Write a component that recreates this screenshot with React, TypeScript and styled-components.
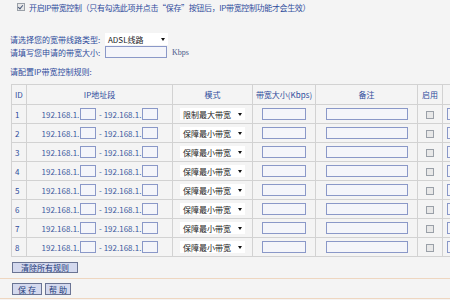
import React from 'react';
import styled, { createGlobalStyle } from 'styled-components';

const GlobalStyle = createGlobalStyle`
  html, body {
    margin: 0;
    padding: 0;
    background: #f4f4f4;
    overflow: hidden;
  }
  body {
    font-family: "Noto Sans CJK SC", "Noto Sans", sans-serif;
    font-size: 8px;
    color: #2f4c9c;
  }
`;

const Page = styled.div`
  width: 520px;
  display: flex;
  flex-direction: column;
`;

const EnableRow = styled.label`
  display: flex;
  align-items: center;
  gap: 4px;
  height: 12px;
  margin: 1px 0 0 17px;
  letter-spacing: -0.35px;
`;

const Check = styled.span<{ checked?: boolean }>`
  display: inline-block;
  box-sizing: border-box;
  width: 8px;
  height: 8px;
  border: 1px solid #9aa0a8;
  background: #e8e8e8;
  position: relative;
  vertical-align: middle;
  &::after {
    content: '';
    display: ${p => (p.checked ? 'block' : 'none')};
    position: absolute;
    left: 1px;
    top: 0;
    width: 2px;
    height: 4px;
    border: solid #4a5a7a;
    border-width: 0 1px 1px 0;
    transform: rotate(40deg);
  }
`;

const FormBlock = styled.div`
  display: flex;
  flex-direction: column;
  gap: 1px;
  margin: 20px 0 0 10px;
`;

const FormRow = styled.div`
  display: flex;
  align-items: center;
  height: 12px;
`;

const FormLabel = styled.span`
  width: 95px;
`;

const FakeSelect = styled.div<{ w: number }>`
  box-sizing: border-box;
  width: ${p => p.w}px;
  height: 12px;
  background: #fff;
  display: flex;
  align-items: center;
  justify-content: space-between;
  padding: 0 3px;
  color: #222;
  font-size: 8px;
  &::after {
    content: '';
    border-left: 2.5px solid transparent;
    border-right: 2.5px solid transparent;
    border-top: 3px solid #111;
  }
`;

const TextBox = styled.span<{ w: number }>`
  display: inline-block;
  box-sizing: border-box;
  width: ${p => p.w}px;
  height: 12px;
  border: 1px solid #8a98c8;
  background: #f4f5fa;
  vertical-align: middle;
`;

const Unit = styled.span`
  margin-left: 5px;
  font-family: "Liberation Serif", serif;
  font-size: 8px;
  color: #4a5a8a;
`;

const Caption = styled.div`
  margin: 9px 0 0 10px;
  height: 10px;
  line-height: 10px;
`;

const Table = styled.table`
  margin: 7px 0 0 11px;
  border-collapse: collapse;
  table-layout: fixed;
  width: 520px;
  td, th {
    border: 1px solid #d2d2d2;
    padding: 0;
    font-weight: normal;
    white-space: nowrap;
    overflow: hidden;
  }
`;

const Head = styled.tr`
  height: 20px;
  th { text-align: center; }
  th:first-child { text-align: left; padding-left: 3px; }
`;

const Row = styled.tr`
  height: 19px;
  td { text-align: center; }
  td:first-child { text-align: left; padding-left: 3px; }
`;

const IpText = styled.span`
  color: #3d5aa0;
  margin: 0 1px;
  vertical-align: middle;
`;

const ModeCell = styled.td`
  && { text-align: left; padding-left: 7px; }
`;

const ExtraCell = styled.td`
  && { text-align: left; padding-left: 4px; }
`;

const Actions = styled.div`
  display: flex;
  margin: 5px 0 0 12px;
`;

const Button = styled.button<{ w: number; h?: number }>`
  box-sizing: border-box;
  width: ${p => p.w}px;
  height: ${p => p.h ?? 11}px;
  padding: 0;
  border: 1px solid #6a7494;
  background: #d4d9ee;
  color: #233a7a;
  font-family: "Noto Sans CJK SC", sans-serif;
  font-size: 8px;
  line-height: 9px;
`;

const Divider = styled.div<{ top?: number }>`
  height: 1px;
  margin-top: ${p => p.top ?? 0}px;
  background: #eed6c0;
`;

const Footer = styled.div`
  display: flex;
  gap: 3px;
  padding: 4px 0 3px 12px;
`;

type Rule = { id: number; mode: string };

const rules: Rule[] = [1, 2, 3, 4, 5, 6, 7, 8].map(id => ({
  id,
  mode: id === 1 ? '限制最大带宽' : '保障最小带宽',
}));

export default function App() {
  return (
    <Page>
      <GlobalStyle />
      <EnableRow>
        <Check checked />
        <span>开启IP带宽控制（只有勾选此项并点击“保存”按钮后，IP带宽控制功能才会生效）</span>
      </EnableRow>
      <FormBlock>
        <FormRow>
          <FormLabel>请选择您的宽带线路类型:</FormLabel>
          <FakeSelect w={63}>ADSL线路</FakeSelect>
        </FormRow>
        <FormRow>
          <FormLabel>请填写您申请的带宽大小:</FormLabel>
          <TextBox w={62} />
          <Unit>Kbps</Unit>
        </FormRow>
      </FormBlock>
      <Caption>请配置IP带宽控制规则:</Caption>
      <Table>
        <colgroup>
          <col style={{ width: 15 }} />
          <col style={{ width: 146 }} />
          <col style={{ width: 80 }} />
          <col style={{ width: 63 }} />
          <col style={{ width: 102 }} />
          <col style={{ width: 25 }} />
          <col style={{ width: 89 }} />
        </colgroup>
        <thead>
          <Head>
            <th>ID</th>
            <th>IP地址段</th>
            <th>模式</th>
            <th>带宽大小(Kbps)</th>
            <th>备注</th>
            <th>启用</th>
            <th></th>
          </Head>
        </thead>
        <tbody>
          {rules.map(r => (
            <Row key={r.id}>
              <td>{r.id}</td>
              <td>
                <IpText>192.168.1.</IpText>
                <TextBox w={16} />
                <IpText> - 192.168.1.</IpText>
                <TextBox w={16} />
              </td>
              <ModeCell>
                <FakeSelect w={65}>{r.mode}</FakeSelect>
              </ModeCell>
              <td><TextBox w={44} /></td>
              <td><TextBox w={82} /></td>
              <td><Check /></td>
              <ExtraCell><TextBox w={60} /></ExtraCell>
            </Row>
          ))}
        </tbody>
      </Table>
      <Actions>
        <Button w={66}>清除所有规则</Button>
      </Actions>
      <Divider top={5} />
      <Footer>
        <Button w={30} h={12}>保 存</Button>
        <Button w={26} h={12}>帮 助</Button>
      </Footer>
      <Divider />
    </Page>
  );
}
